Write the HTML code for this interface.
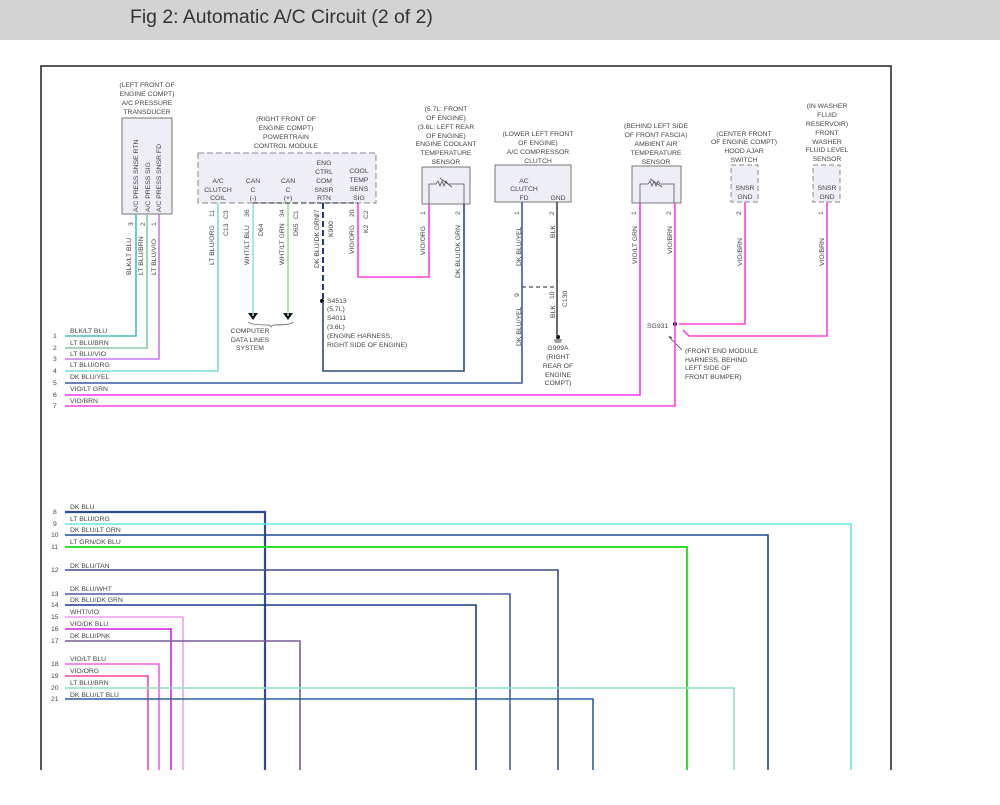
<!DOCTYPE html>
<html><head><meta charset="utf-8"><style>
html,body{margin:0;padding:0;background:#fff;width:1000px;height:805px;overflow:hidden}
.hdr{position:absolute;left:0;top:0;width:1000px;height:40px;background:#d3d3d3}
.hdr span{position:absolute;left:130px;top:6px;font:19.4px "Liberation Sans",sans-serif;font-weight:normal;color:#333}
svg{position:absolute;left:0;top:0}
text{font-family:"Liberation Sans",sans-serif;font-size:6.8px;fill:#444}
</style></head><body>
<div class="hdr"><span>Fig 2: Automatic A/C Circuit (2 of 2)</span></div>
<svg width="1000" height="805" viewBox="0 0 1000 805">
<path d="M41,770 V66 H891 V770" fill="none" stroke="#222" stroke-width="1.5"/>

<rect x="122" y="118" width="50" height="96" fill="#eeeef6" stroke="#777"/>
<rect x="198" y="153" width="178" height="50" fill="#eeeef6" stroke="#888" stroke-dasharray="6,3"/>
<rect x="422" y="167" width="48" height="37" fill="#eeeef6" stroke="#777"/>
<rect x="495" y="165" width="76" height="37" fill="#eeeef6" stroke="#777"/>
<rect x="632" y="166" width="49" height="37" fill="#eeeef6" stroke="#777"/>
<rect x="731" y="165" width="27" height="37" fill="#eeeef6" stroke="#888" stroke-dasharray="5,3"/>
<rect x="813" y="165" width="27" height="37" fill="#eeeef6" stroke="#888" stroke-dasharray="5,3"/>

<g text-anchor="middle">
<text x="147" y="87">(LEFT FRONT OF</text><text x="147" y="96">ENGINE COMPT)</text><text x="147" y="105">A/C PRESSURE</text><text x="147" y="114">TRANSDUCER</text>
</g>
<g font-size="7">
<text transform="translate(138,212) rotate(-90)">A/C PRESS SNSE RTN</text>
<text transform="translate(150,212) rotate(-90)">A/C PRESS SIG</text>
<text transform="translate(161,212) rotate(-90)">A/C PRESS SNSR FD</text>
<text transform="translate(133,226) rotate(-90)">3</text>
<text transform="translate(145,226) rotate(-90)">2</text>
<text transform="translate(156,226) rotate(-90)">1</text>
<text transform="translate(131,275) rotate(-90)">BLK/LT BLU</text>
<text transform="translate(143,275) rotate(-90)">LT BLU/BRN</text>
<text transform="translate(156,275) rotate(-90)">LT BLU/VIO</text>
</g>

<g text-anchor="middle">
<text x="286" y="121">(RIGHT FRONT OF</text><text x="286" y="130">ENGINE COMPT)</text><text x="286" y="139">POWERTRAIN</text><text x="286" y="148">CONTROL MODULE</text>
<text x="218" y="183">A/C</text><text x="218" y="192">CLUTCH</text><text x="218" y="200">COIL</text>
<text x="253" y="183">CAN</text><text x="253" y="192">C</text><text x="253" y="200">(-)</text>
<text x="288" y="183">CAN</text><text x="288" y="192">C</text><text x="288" y="200">(+)</text>
<text x="324" y="165">ENG</text><text x="324" y="174">CTRL</text><text x="324" y="183">COM</text><text x="324" y="192">SNSR</text><text x="324" y="200">RTN</text>
<text x="359" y="173">COOL</text><text x="359" y="182">TEMP</text><text x="359" y="191">SENS</text><text x="359" y="200">SIG</text>
</g>
<g font-size="7">
<text transform="translate(214,217) rotate(-90)">11</text><text transform="translate(228,219) rotate(-90)">C3</text>
<text transform="translate(249,217) rotate(-90)">36</text>
<text transform="translate(284,217) rotate(-90)">34</text><text transform="translate(298,219) rotate(-90)">C1</text>
<text transform="translate(319,217) rotate(-90)">27</text>
<text transform="translate(354,217) rotate(-90)">20</text><text transform="translate(368,219) rotate(-90)">C2</text>
<text transform="translate(214,265) rotate(-90)">LT BLU/ORG</text><text transform="translate(228,236) rotate(-90)">C13</text>
<text transform="translate(249,265) rotate(-90)">WHT/LT BLU</text><text transform="translate(263,236) rotate(-90)">D64</text>
<text transform="translate(284,265) rotate(-90)">WHT/LT GRN</text><text transform="translate(298,236) rotate(-90)">D65</text>
<text transform="translate(319,268) rotate(-90)">DK BLU/DK GRN</text><text transform="translate(333,237) rotate(-90)">K900</text>
<text transform="translate(354,254) rotate(-90)">VIO/ORG</text><text transform="translate(368,233) rotate(-90)">K2</text>
</g>
<text x="250" y="333" text-anchor="middle">COMPUTER</text><text x="250" y="342" text-anchor="middle">DATA LINES</text><text x="250" y="350" text-anchor="middle">SYSTEM</text>
<path d="M248,313 l5,7 l5,-7z M283,313 l5,7 l5,-7z" fill="#111"/>
<path d="M248,322 q3,3 20,3 q2,0 3,2 q1,-2 3,-2 q17,0 19,-3" fill="none" stroke="#555" stroke-width="0.7"/>
<text x="327" y="303">S4513</text><text x="327" y="311">(5.7L)</text><text x="327" y="320">S4011</text><text x="327" y="329">(3.6L)</text>
<text x="327" y="338">(ENGINE HARNESS,</text><text x="327" y="347">RIGHT SIDE OF ENGINE)</text>
<circle cx="322" cy="301" r="2" fill="#000"/>

<g text-anchor="middle">
<text x="446" y="111">(5.7L: FRONT</text><text x="446" y="120">OF ENGINE)</text><text x="446" y="129">(3.6L: LEFT REAR</text><text x="446" y="138">OF ENGINE)</text><text x="446" y="146">ENGINE COOLANT</text><text x="446" y="155">TEMPERATURE</text><text x="446" y="164">SENSOR</text>
</g>
<path d="M429,204 V184 H436 l2,-3 l2,5 l2,-5 l2,5 l2,-5 l2,3 H464 V204 M440,178 l12,9" fill="none" stroke="#555" stroke-width="0.8"/>
<g font-size="7">
<text transform="translate(425,215) rotate(-90)">1</text><text transform="translate(460,215) rotate(-90)">2</text>
<text transform="translate(425,255) rotate(-90)">VIO/ORG</text><text transform="translate(460,278) rotate(-90)">DK BLU/DK GRN</text>
</g>

<g text-anchor="middle">
<text x="538" y="136">(LOWER LEFT FRONT</text><text x="538" y="145">OF ENGINE)</text><text x="538" y="154">A/C COMPRESSOR</text><text x="538" y="163">CLUTCH</text>
<text x="524" y="183">AC</text><text x="524" y="191">CLUTCH</text><text x="524" y="200">FD</text><text x="558" y="200">GND</text>
</g>
<g font-size="7">
<text transform="translate(519,215) rotate(-90)">1</text><text transform="translate(554,215) rotate(-90)">2</text>
<text transform="translate(521,266) rotate(-90)">DK BLU/YEL</text><text transform="translate(555,238) rotate(-90)">BLK</text>
<text transform="translate(519,297) rotate(-90)">9</text><text transform="translate(554,299) rotate(-90)">10</text><text transform="translate(567,307) rotate(-90)">C130</text>
<text transform="translate(521,346) rotate(-90)">DK BLU/YEL</text><text transform="translate(555,318) rotate(-90)">BLK</text>
</g>
<path d="M522,287 H557" stroke="#222" stroke-dasharray="4,3"/>
<circle cx="558" cy="337" r="2" fill="#000"/><path d="M554,340 h8 M555,342 h6" stroke="#000" stroke-width="0.7"/>
<g text-anchor="middle"><text x="558" y="350">G909A</text><text x="558" y="359">(RIGHT</text><text x="558" y="368">REAR OF</text><text x="558" y="377">ENGINE</text><text x="558" y="385">COMPT)</text></g>

<g text-anchor="middle">
<text x="656" y="128">(BEHIND LEFT SIDE</text><text x="656" y="137">OF FRONT FASCIA)</text><text x="656" y="146">AMBIENT AIR</text><text x="656" y="155">TEMPERATURE</text><text x="656" y="164">SENSOR</text>
</g>
<path d="M640,203 V184 H648 l2,-3 l2,5 l2,-5 l2,5 l2,-5 l2,3 H674 V203 M650,179 l12,8" fill="none" stroke="#555" stroke-width="0.8"/>
<g font-size="7">
<text transform="translate(636,215) rotate(-90)">1</text><text transform="translate(671,215) rotate(-90)">2</text>
<text transform="translate(637,264) rotate(-90)">VIO/LT GRN</text><text transform="translate(672,254) rotate(-90)">VIO/BRN</text>
</g>
<text x="647" y="328">SG931</text>
<circle cx="675" cy="324" r="2" fill="#000"/>
<path d="M682,350 L670,338" stroke="#333" stroke-width="0.7"/><path d="M668,336 l4,1 l-1,2z" fill="#333"/>
<text x="685" y="353">(FRONT END MODULE</text><text x="685" y="362">HARNESS, BEHIND</text><text x="685" y="370">LEFT SIDE OF</text><text x="685" y="379">FRONT BUMPER)</text>

<g text-anchor="middle">
<text x="744" y="136">(CENTER FRONT</text><text x="744" y="144">OF ENGINE COMPT)</text><text x="744" y="153">HOOD AJAR</text><text x="744" y="162">SWITCH</text>
<text x="745" y="190">SNSR</text><text x="745" y="199">GND</text>
<text x="827" y="108">(IN WASHER</text><text x="827" y="117">FLUID</text><text x="827" y="126">RESERVOIR)</text><text x="827" y="135">FRONT</text><text x="827" y="144">WASHER</text><text x="827" y="152">FLUID LEVEL</text><text x="827" y="161">SENSOR</text>
<text x="827" y="190">SNSR</text><text x="827" y="199">GND</text>
</g>
<g font-size="7">
<text transform="translate(741,215) rotate(-90)">2</text><text transform="translate(823,215) rotate(-90)">1</text>
<text transform="translate(742,266) rotate(-90)">VIO/BRN</text><text transform="translate(824,266) rotate(-90)">VIO/BRN</text>
</g>

<g fill="none" stroke-width="1.6">
<path d="M65,336 H136 V214" stroke="#4cbcc4"/>
<path d="M65,348 H147 V214" stroke="#8cc8a8"/>
<path d="M65,359 H159 V214" stroke="#c878f0"/>
<path d="M65,371 H218 V203" stroke="#78dcd8"/>
<path d="M65,383 H522 V202" stroke="#3a5aa0"/>
<path d="M65,395 H640 V203" stroke="#ff30f0"/>
<path d="M65,406 H675 V203" stroke="#ff40e8"/>
<path d="M253,203 V316" stroke="#90e0e8"/>
<path d="M288,203 V316" stroke="#90e890"/>
<path d="M323,203 V300" stroke="#1a3a8a" stroke-dasharray="6,3" stroke-width="2"/>
<path d="M323,301 V371 H464 V204" stroke="#2a4a8a"/>
<path d="M358,203 V277 H429 V204" stroke="#ff40e0"/>
<path d="M557,202 V337" stroke="#444"/>
<path d="M679,324 H745 V202" stroke="#ff40e8"/>
<path d="M683,330 L689,336 H827 V202" stroke="#ff40e8"/>
<path d="M253,203 H358" stroke="#222" stroke-dasharray="5,3" stroke-width="1"/>
</g>

<g fill="none" stroke-width="1.6">
<path d="M65,512 H265 V770" stroke="#2d4a9a" stroke-width="2.2"/>
<path d="M65,524 H851 V770" stroke="#60e8e8"/>
<path d="M65,535 H768 V770" stroke="#1f4a90"/>
<path d="M65,547 H687 V770" stroke="#30e030" stroke-width="2"/>
<path d="M65,570 H558 V770" stroke="#3a4e8a"/>
<path d="M65,594 H510 V770" stroke="#4a5ea8"/>
<path d="M65,605 H476 V770" stroke="#1a3a8a"/>
<path d="M65,617 H183 V770" stroke="#f0a0f0"/>
<path d="M65,629 H171 V770" stroke="#d020e0"/>
<path d="M65,641 H300 V770" stroke="#7a5a9a"/>
<path d="M65,664 H159 V770" stroke="#f060f0"/>
<path d="M65,676 H148 V770" stroke="#ff40a0"/>
<path d="M65,688 H734 V770" stroke="#90e0c0"/>
<path d="M65,699 H593 V770" stroke="#2a60a0"/>
</g>

<g>
<text x="53" y="338">1</text><text x="53" y="350">2</text><text x="53" y="361">3</text><text x="53" y="373">4</text><text x="53" y="385">5</text><text x="53" y="397">6</text><text x="53" y="408">7</text>
<text x="70" y="333">BLK/LT BLU</text><text x="70" y="345">LT BLU/BRN</text><text x="70" y="356">LT BLU/VIO</text><text x="70" y="367">LT BLU/ORG</text><text x="70" y="379">DK BLU/YEL</text><text x="70" y="391">VIO/LT GRN</text><text x="70" y="403">VIO/BRN</text>
<text x="53" y="514">8</text><text x="53" y="526">9</text><text x="51" y="537">10</text><text x="51" y="549">11</text><text x="51" y="572">12</text><text x="51" y="596">13</text><text x="51" y="607">14</text><text x="51" y="619">15</text><text x="51" y="631">16</text><text x="51" y="643">17</text><text x="51" y="666">18</text><text x="51" y="678">19</text><text x="51" y="690">20</text><text x="51" y="701">21</text>
<text x="70" y="509">DK BLU</text><text x="70" y="521">LT BLU/ORG</text><text x="70" y="532">DK BLU/LT GRN</text><text x="70" y="544">LT GRN/DK BLU</text><text x="70" y="568">DK BLU/TAN</text><text x="70" y="591">DK BLU/WHT</text><text x="70" y="602">DK BLU/DK GRN</text><text x="70" y="614">WHT/VIO</text><text x="70" y="626">VIO/DK BLU</text><text x="70" y="638">DK BLU/PNK</text><text x="70" y="661">VIO/LT BLU</text><text x="70" y="673">VIO/ORG</text><text x="70" y="685">LT BLU/BRN</text><text x="70" y="697">DK BLU/LT BLU</text>
</g>
</svg>
</body></html>
